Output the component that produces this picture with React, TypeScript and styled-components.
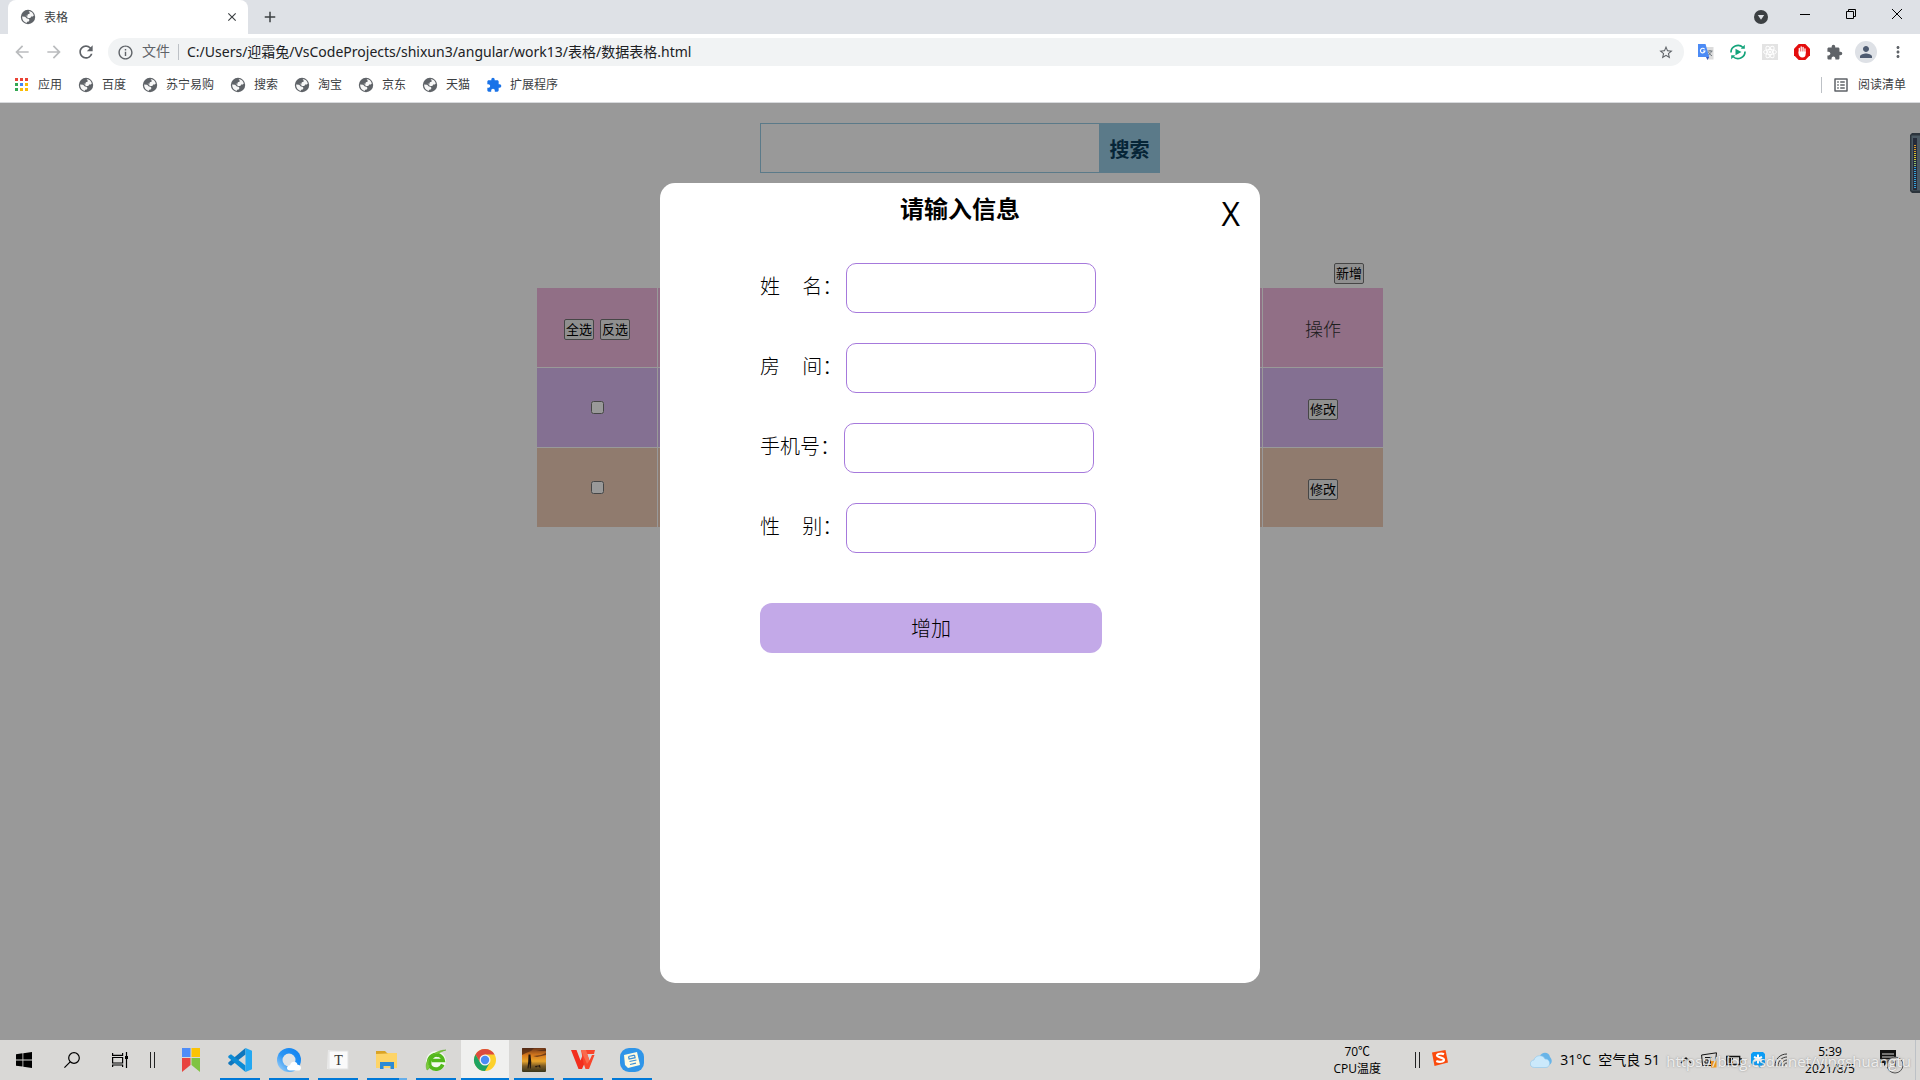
import React from "react";
import styled, { createGlobalStyle } from "styled-components";
import {
  MdAdd,
  MdArrowBack,
  MdArrowForward,
  MdClose,
  MdExtension,
  MdInfoOutline,
  MdMoreVert,
  MdOutlineListAlt,
  MdPerson,
  MdRefresh,
  MdStarBorder,
} from "react-icons/md";

const GlobalStyle = createGlobalStyle`
  *, *::before, *::after { box-sizing: border-box; }
  body {
    margin: 0;
    font-family: "Open Sans", "Noto Sans CJK SC", sans-serif;
    color: #000;
  }
  button, input {
    font-family: inherit;
    margin: 0;
  }
`;

const Screen = styled.div`
  display: flex;
  flex-direction: column;
  min-height: 100vh;
  overflow: hidden;
`;

/* ---------- browser frame ---------- */

const TabStrip = styled.div`
  display: flex;
  height: 34px;
  padding-left: 8px;
  background: #dee1e6;
`;

const Tab = styled.div`
  display: flex;
  align-items: center;
  gap: 8px;
  width: 240px;
  padding: 0 8px 0 12px;
  border-radius: 8px 8px 0 0;
  background: #fff;
  color: #3c4043;
  font-size: 12px;
`;

const TabTitle = styled.span`
  flex: 1;
`;

const PlainButton = styled.button<{ $width?: number; $color?: string }>`
  display: flex;
  align-items: center;
  justify-content: center;
  width: ${(p) => p.$width ?? 16}px;
  padding: 0;
  border: 0;
  background: transparent;
  color: ${(p) => p.$color ?? "#5f6368"};
`;

const WindowControls = styled.div`
  display: flex;
  align-items: center;
  height: 28px;
  margin-left: auto;
`;

const Toolbar = styled.div`
  display: flex;
  align-items: center;
  height: 36px;
  padding: 0 6px;
  background: #fff;
`;

const Omnibox = styled.div`
  display: flex;
  align-items: center;
  flex: 1;
  gap: 8px;
  height: 28px;
  margin: 0 6px;
  padding: 0 10px 0 9px;
  border-radius: 14px;
  background: #f1f3f4;
  color: #5f6368;
  font-size: 14px;
`;

const Scheme = styled.span`
  padding-bottom: 2px;
  line-height: 20px;
`;

const Divider = styled.span<{ $height: number }>`
  width: 1px;
  height: ${(p) => p.$height}px;
  background: #bdc1c6;
`;

const Address = styled.input`
  flex: 1;
  min-width: 0;
  padding: 0 0 2px;
  border: 0;
  outline: 0;
  background: transparent;
  color: #202124;
  font-family: "Noto Sans", "Noto Sans CJK SC", sans-serif;
  font-size: 14px;
`;

const Extensions = styled.div`
  display: flex;
  align-items: center;
`;

const Avatar = styled.span`
  display: flex;
  align-items: center;
  justify-content: center;
  width: 22px;
  height: 22px;
  border-radius: 50%;
  background: #dee1e6;
  color: #4d5a70;
`;

const Bookmarks = styled.nav`
  display: flex;
  align-items: center;
  gap: 16px;
  height: 33px;
  padding: 0 14px 3px;
  border-bottom: 1px solid #d8dadd;
  background: #fff;
`;

const Bookmark = styled.a`
  display: flex;
  align-items: center;
  gap: 8px;
  color: #3c4043;
  font-size: 12px;
  line-height: 16px;
  text-decoration: none;
`;

const ReadingList = styled.div`
  display: flex;
  align-items: center;
  gap: 10px;
  margin-left: auto;
`;

/* ---------- web page ---------- */

const Page = styled.main`
  position: relative;
  display: flex;
  flex: 1;
  flex-direction: column;
  align-items: center;
  padding-top: 20px;
  background: #fff;
`;

const SearchForm = styled.form`
  display: flex;
  width: 400px;
  height: 50px;
  margin-bottom: 90px;
`;

const SearchInput = styled.input`
  flex: 1;
  min-width: 0;
  border: 1px solid #98cbe5;
  border-right: 0;
  outline: 0;
  background: #fff;
`;

const SearchButton = styled.button`
  width: 61px;
  padding: 0;
  border: 0;
  background: #98cbe5;
  color: #0a3e5d;
  font-size: 20px;
  font-weight: 700;
`;

const TableArea = styled.section`
  width: 846px;
`;

const TableActions = styled.div`
  display: flex;
  justify-content: flex-end;
  padding: 0 19px 4px 0;
`;

const SmallButton = styled.button`
  height: 21px;
  padding: 0 1px;
  border: 1px solid #767676;
  border-radius: 2px;
  background: #efefef;
  color: #000;
  font-size: 13px;
  line-height: 19px;
`;

const Table = styled.table`
  width: 100%;
  border-collapse: separate;
  border-spacing: 0;
  table-layout: fixed;
`;

const Row = styled.tr<{ $tone: string }>`
  height: 80px;
  background: ${(p) => p.$tone};

  th, td {
    width: 121px;
    padding: 0;
    border-right: 1px solid #fff;
    border-bottom: 1px solid #fff;
    color: #333;
    font-size: 18px;
    font-weight: 300;
    text-align: center;
  }
  th:last-child, td:last-child {
    width: 120px;
    border-right: 0;
  }
`;

const ButtonPair = styled.div`
  display: flex;
  justify-content: center;
  gap: 6px;
  padding-top: 3px;
`;

const Check = styled.input`
  display: block;
  width: 13px;
  height: 13px;
  margin: 0 auto;
`;

const Mask = styled.div`
  position: absolute;
  inset: 0;
  display: flex;
  align-items: flex-start;
  justify-content: center;
  padding-top: 80px;
  background: rgba(0, 0, 0, 0.4);
`;

const Dialog = styled.div`
  position: relative;
  width: 600px;
  min-height: 800px;
  border-radius: 15px;
  background: #fff;
`;

const DialogTitle = styled.h2`
  height: 80px;
  margin: 0;
  padding-top: 8px;
  font-size: 24px;
  line-height: 36px;
  text-align: center;
`;

const DialogClose = styled.button`
  position: absolute;
  top: 11px;
  right: 20px;
  padding: 0;
  border: 0;
  background: transparent;
  font-size: 32px;
  line-height: 40px;
`;

const DialogForm = styled.form`
  display: flex;
  flex-direction: column;
  gap: 30px;
  padding-left: 100px;
`;

const Field = styled.div`
  display: flex;
  align-items: center;
  gap: 4px;
`;

const FieldLabel = styled.label`
  padding-bottom: 2px;
  font-size: 20px;
  font-weight: 300;
  line-height: 30px;
  white-space: pre;
`;

const FieldInput = styled.input`
  width: 250px;
  height: 50px;
  padding: 0 10px;
  border: 1px solid #a679dc;
  border-radius: 10px;
  outline: 0;
  font-size: 20px;
`;

const SubmitButton = styled.button`
  width: 342px;
  height: 50px;
  margin-top: 20px;
  padding: 0 0 2px;
  border: 0;
  border-radius: 12px;
  background: #c3a9e8;
  color: #000;
  font-size: 20px;
  font-weight: 300;
`;

const Gauge = styled.div`
  position: absolute;
  top: 30px;
  right: 0;
  display: flex;
`;

/* ---------- desktop taskbar ---------- */

const Taskbar = styled.footer`
  position: relative;
  display: flex;
  height: 40px;
  background: #d9d8d6;
`;

const TaskButton = styled.button<{ $state?: "open" | "active" | "stacked" }>`
  position: relative;
  display: flex;
  align-items: center;
  justify-content: center;
  width: 48px;
  height: 40px;
  padding: 0;
  border: 0;
  background: ${(p) => (p.$state === "active" ? "#f0f0ef" : "transparent")};

  &::after {
    content: "";
    position: absolute;
    right: ${(p) => (p.$state === "active" ? 0 : 4)}px;
    bottom: 0;
    left: ${(p) => (p.$state === "active" ? 0 : 4)}px;
    height: 2px;
    background: ${(p) =>
      p.$state === "stacked"
        ? "linear-gradient(90deg, #0078d7 80%, #66aeea 80%)"
        : p.$state
        ? "#0078d7"
        : "transparent"};
  }
`;

const Apps = styled.div`
  display: flex;
  gap: 1px;
`;

const Grip = styled.span`
  align-self: center;
  width: 5px;
  height: 16px;
  border: solid #222;
  border-width: 0 1px;
`;

const Tray = styled.div`
  display: flex;
  align-items: center;
  margin-left: auto;
`;

const TwoLines = styled.div<{ $width: number }>`
  width: ${(p) => p.$width}px;
  font-size: 12px;
  line-height: 17px;
  text-align: center;
`;

const TrayGroup = styled.div<{ $gap: number; $left: number }>`
  display: flex;
  align-items: center;
  gap: ${(p) => p.$gap}px;
  margin-left: ${(p) => p.$left}px;
`;

const Weather = styled.span`
  font-size: 14px;
  line-height: 20px;
  white-space: nowrap;
`;

const Watermark = styled.span`
  position: absolute;
  right: 9px;
  bottom: 8px;
  color: rgba(255, 255, 255, 0.8);
  font-size: 15px;
  line-height: 22px;
  text-shadow: 0 0 2px rgba(110, 110, 110, 0.7);
  pointer-events: none;
`;

/* ---------- drawings ---------- */

const Globe = () => (
  <svg width="16" height="16" viewBox="0 0 16 16">
    <circle cx="8" cy="8" r="7.2" fill="#5f6368" />
    <path d="M8.6 2.1c2.6.1 4.7 2 5.2 4.4l-1 .9-1.6.1-.9 1.6H7.5V7.7L5.4 6.8h2.1l.3-1.6 1.8-.4V3.6z" fill="#fff" opacity=".95" />
    <path d="M2.1 7.5l3 .3 1.8 1.7 1.7.2.9 1.3-.8 1.4-1.5.3-.6 1.2C3.8 13.100 2 10.800 2.1 7.500z" fill="#fff" opacity=".95" />
  </svg>
);

const AppsGrid = () => (
  <svg width="16" height="16" viewBox="0 0 16 16">
    {["#ea4335", "#ea4335", "#ea4335", "#34a853", "#4285f4", "#fbbc04", "#34a853", "#fbbc04", "#fbbc04"].map((c, i) => (
      <rect key={i} x={1 + (i % 3) * 5} y={1 + Math.floor(i / 3) * 5} width="3" height="3" fill={c} />
    ))}
  </svg>
);

const DropMark = () => (
  <svg width="14" height="20" viewBox="0 0 14 20">
    <circle cx="7" cy="13" r="7" fill="#3c4043" />
    <path d="M3.800 11h6.400L7 15.800z" fill="#dee1e6" />
  </svg>
);

const Minimize = () => (
  <svg width="10" height="10" viewBox="0 0 10 10"><path d="M0 5.500h10" stroke="#000" /></svg>
);

const Restore = () => (
  <svg width="10" height="10" viewBox="0 0 10 10" fill="none" stroke="#000">
    <path d="M.5 2.500h7v7h-7zM2.500 2.500v-2h7v7h-2" />
  </svg>
);

const CloseWindow = () => (
  <svg width="10" height="10" viewBox="0 0 10 10"><path d="M0 0l10 10M10 0L0 10" stroke="#000" /></svg>
);

const Translate = () => (
  <svg width="16" height="16" viewBox="0 0 16 16">
    <path d="M7 3h8.500v12.500H9z" fill="#dcdcdc" />
    <path d="M9.500 7h5M12 6v1M13.500 7c-.5 2-2 3.500-3.500 4.200M10.500 8c.8 1.800 2 3 3.500 3.800" stroke="#70787f" fill="none" />
    <path d="M0 0h7.500l3.700 13H0z" fill="#4c8bf5" />
    <path d="M8 13h3.200L9.500 16z" fill="#3457c0" />
    <path d="M6.600 5.200A2.300 2.300 0 1 0 7 7H5" stroke="#fff" strokeWidth="1.100" fill="none" />
  </svg>
);

const SyncPlay = () => (
  <svg width="16" height="16" viewBox="0 0 16 16" fill="none" stroke="#12a37a" strokeWidth="1.700">
    <path d="M1 8.500a7 6.800 0 0 1 12-5M15 7.500a7 6.800 0 0 1-12 5" />
    <path d="M14.800.8v4h-4zM1.200 15.200v-4h4z" fill="#12a37a" stroke="none" />
    <path d="M5.500 4.800v6.400L11.500 8z" fill="#12a37a" stroke="none" />
  </svg>
);

const ReactBadge = () => (
  <svg width="16" height="16" viewBox="0 0 16 16" fill="none" stroke="#fff">
    <path d="M0 0h16v16H0z" fill="#e3e3e3" stroke="none" />
    <ellipse cx="8" cy="8" rx="6.500" ry="2.500" />
    <ellipse cx="8" cy="8" rx="6.500" ry="2.500" transform="rotate(60 8 8)" />
    <ellipse cx="8" cy="8" rx="6.500" ry="2.500" transform="rotate(120 8 8)" />
    <circle cx="8" cy="8" r="1" fill="#fff" />
  </svg>
);

const StopHand = () => (
  <svg width="16" height="16" viewBox="0 0 16 16">
    <path d="M4.700 0h6.600L16 4.700v6.600L11.300 16H4.700L0 11.300V4.700z" fill="#e40d0d" />
    <path d="M5.300 9V4.500M7.200 8V3M9.100 8V3.300M11 9V4.800" stroke="#fff" strokeWidth="1.300" strokeLinecap="round" />
    <path d="M4.600 7.500h7v3c0 2-1.300 3-3.200 3-2.200 0-3.800-2-3.800-3.500z" fill="#fff" />
  </svg>
);

const AudioGauge = () => (
  <svg width="10" height="60" viewBox="0 0 10 60">
    <path d="M10 0H2L0 2v56l2 2h8z" fill="#2c343c" />
    <path d="M1.500 2.500H10v55H1.500z" fill="#4b5963" />
    <rect x="3" y="5" width="4" height="52" fill="#262b3a" />
    {Array.from({ length: 22 }, (_, i) => (
      <rect key={i} x="4" y={12 + i * 2} width="2" height="1" fill={i < 4 ? "#d79a2b" : i < 8 ? "#d9c630" : i < 11 ? "#8fc06a" : "#35a3da"} />
    ))}
  </svg>
);

const StartLogo = () => (
  <svg width="16" height="16" viewBox="0 0 16 16">
    <path d="M0 2.300L6.500 1.300v6.200H0zM7.300 1.200L16 0v7.500H7.300zM0 8.400h6.500v6.200L0 13.700zM7.300 8.400H16V16l-8.700-1.200z" />
  </svg>
);

const SearchGlyph = () => (
  <svg width="16" height="16" viewBox="0 0 16 16" fill="none" stroke="#000" strokeWidth="1.200">
    <circle cx="10" cy="6" r="5.300" />
    <path d="M6.200 9.800L.4 15.600" />
  </svg>
);

const TaskView = () => (
  <svg width="16" height="16" viewBox="0 0 16 16" fill="none" stroke="#000" strokeWidth="1.200">
    <path d="M.6 1v2.400h10V1M.6 15v-2h10v2M.6 5.500h10v5.500H.6zM14.500 0v16" />
    <path d="M13 4h3v3h-3z" fill="#000" stroke="none" />
  </svg>
);

const Ribbons = () => (
  <svg width="18" height="24" viewBox="0 0 18 24">
    <path d="M0 0h8.500v9H0z" fill="#4f8df7" />
    <path d="M9.500 0H18v9H9.500z" fill="#fcc304" />
    <path d="M0 10h8.500v7L0 24z" fill="#e8443f" />
    <path d="M9.500 10H18v14l-8.500-7z" fill="#80c342" />
  </svg>
);

const Code = () => (
  <svg width="24" height="24" viewBox="0 0 24 24">
    <path d="M17.500 0v6.500L3 17.800.3 15.900v-1.500z" fill="#0f76bd" />
    <path d="M17.500 24v-6.500L3 6.200.3 8.100v1.500z" fill="#0c8bd5" />
    <path d="M17.500 0L24 2.800v18.400L17.500 24z" fill="#24a8f2" />
  </svg>
);

const QBrowser = () => (
  <svg width="24" height="24" viewBox="0 0 24 24">
    <defs>
      <linearGradient id="q" x1="1" y1="0" x2="0" y2="1">
        <stop offset="0" stopColor="#0b80f0" />
        <stop offset=".55" stopColor="#2b95f4" />
        <stop offset="1" stopColor="#b2daf8" />
      </linearGradient>
    </defs>
    <circle cx="12" cy="12" r="12" fill="url(#q)" />
    <circle cx="12" cy="12" r="6.500" fill="#dfe3e6" />
    <path d="M13 22.500c-4 0-4-5 0-5.200.8-4.500 7-4.500 7.500-.5 4.500.2 4.500 5.700.7 5.700z" fill="#fff" />
  </svg>
);

const Typora = () => (
  <svg width="24" height="24" viewBox="0 0 24 24">
    <path d="M2 2l9 1 10 0v18l-9-1-11 1z" fill="#ececec" />
    <rect x="3" y="3" width="19" height="18" fill="#fafafa" stroke="#e2e2e2" />
    <text x="12.500" y="17" textAnchor="middle" fontFamily="Liberation Serif" fontSize="14" fill="#333">T</text>
  </svg>
);

const Folder = () => (
  <svg width="24" height="20" viewBox="0 0 24 20">
    <path d="M1 1h9l2 2h10v15H1z" fill="#d9a326" />
    <path d="M1 4l11-.5 1-.5h9v15H1z" fill="#fdd468" />
    <path d="M5 12h14v7h-3.500v-3h-7v3H5z" fill="#2b8ad6" />
  </svg>
);

const GreenE = () => (
  <svg width="24" height="24" viewBox="0 0 24 24" fill="none">
    <circle cx="12" cy="13" r="10" fill="#f4faf0" />
    <path d="M18.800 16.500A7.300 7.300 0 1 1 19.200 12.500H8" stroke="#52b81b" strokeWidth="3.600" />
    <path d="M3 22C-1 13 10 2 22 2 15 4 6 10 5.500 19c0 1-1 2.500-2.500 3z" fill="#7ccb3c" stroke="#58aa25" strokeWidth=".5" />
    <path d="M6 17c-1-8 5-11 9-9" stroke="#52b81b" strokeWidth="3" />
  </svg>
);

const ChromeLogo = () => (
  <svg width="24" height="24" viewBox="0 0 24 24">
    <circle cx="12" cy="12" r="11" fill="#fdd12c" />
    <path d="M2.470 6.500A11 11 0 0 1 21.530 6.500H12L7.240 14.750z" fill="#dc4b3e" />
    <path d="M2.470 6.500A11 11 0 0 0 12 23l4.760-8.250H7.240z" fill="#1ea362" />
    <circle cx="12" cy="12" r="5.500" fill="#f3f3f3" />
    <circle cx="12" cy="12" r="4.200" fill="#4a8bf5" />
  </svg>
);

const SunsetPicture = () => (
  <svg width="24" height="24" viewBox="0 0 24 24">
    <defs>
      <linearGradient id="sunset" x1="0" y1="0" x2="0" y2="1">
        <stop offset="0" stopColor="#6b3518" />
        <stop offset=".3" stopColor="#d87a1d" />
        <stop offset=".55" stopColor="#e8a52c" />
        <stop offset=".75" stopColor="#7a5a25" />
        <stop offset="1" stopColor="#3a351a" />
      </linearGradient>
    </defs>
    <rect width="24" height="24" rx="1" fill="url(#sunset)" />
    <path d="M0 0h12L9 3 4 5 0 7zM14 3l10-2v2zM11 8l8-1 5-2v2l-9 2z" fill="#4a2716" opacity=".7" />
    <path d="M6.500 6.500h2l.8 8-.5 6H7.800l-.3-5-1 5H5.500l.7-7zM13 18l4-.5 1-.8.500 3h-.8l-.7-1.200h-2l-1 1.200z" fill="#20160f" />
  </svg>
);

const Wps = () => (
  <svg width="24" height="20" viewBox="0 0 24 20">
    <path d="M0 0h5.500l4 10.500L12.500 3l2.500 7L11 19H7.500z" fill="#f22e1e" />
    <path d="M10 0h14l-1 4h-7l2.500 6.500L21 5h2.500L18 19h-3.500l-2-6z" fill="#f8452b" />
    <path d="M10 0h5l3.500 10.500L16 14l-4-9z" fill="#fa6a4c" />
  </svg>
);

const Notes = () => (
  <svg width="24" height="24" viewBox="0 0 24 24">
    <rect width="24" height="24" rx="9" fill="#2f95e8" />
    <path d="M4 7l13-3 3 13-12 3-3-3z" fill="#fffbe0" />
    <path d="M8.500 8.500l6-1.300M8.500 8.500l.6 2.500 6-1.300-.6-2.500M9.500 13.500l7-1.500M10 16.500l6-1.300" stroke="#3c8fd6" strokeWidth="1.200" fill="none" />
  </svg>
);

const Sogou = () => (
  <svg width="16" height="20" viewBox="0 0 16 20">
    <path d="M0 2.500L13.500 0 16 12.500 2.500 16z" fill="#fb4a0c" />
    <path d="M12 4.200c-2-1-7-.6-7 1.300S12 7.300 12 9.700s-5 2.600-7.700 1.300" stroke="#fff" strokeWidth="2.200" fill="none" />
  </svg>
);

const Cloud = () => (
  <svg width="22" height="16" viewBox="0 0 22 16">
    <path d="M10 4c1-4 9-5 10 1 3 3 2 8-2 8H9z" fill="#68b4e8" />
    <path d="M4.500 15.500C-1 15.500-1 8.500 4 8c1-5 9-6 11-1 6 0 6 8 1 8.500z" fill="#cbe9fb" stroke="#8cc6ec" strokeWidth=".6" />
  </svg>
);

const Chevron = () => (
  <svg width="12" height="8" viewBox="0 0 12 8" fill="none" stroke="#111" strokeWidth="1.300"><path d="M1 7l5-5 5 5" /></svg>
);

const InputTray = () => (
  <svg width="16" height="16" viewBox="0 0 16 16" fill="none" stroke="#111">
    <path d="M.6 3L15.500.8 14 13.500H1.500zM4 5.500h7M4 8h3v3H4zM9.500 5.500v6" />
    <path d="M10 9h5.500v6.500H10z" fill="#f59b1c" stroke="none" />
  </svg>
);

const Battery = () => (
  <svg width="16" height="12" viewBox="0 0 16 12" fill="none" stroke="#111" strokeWidth="1.300">
    <path d="M.7 2.500h13v8H.7zM14 5h1.500v3H14" />
    <path d="M2 4h3v5H2zM6 4h1v5H6z" fill="#111" stroke="none" />
  </svg>
);

const BlueBadge = () => (
  <svg width="14" height="16" viewBox="0 0 14 16">
    <path d="M2 0h10l2 2v10l-3 1-2 3-2-3H2l-2-2V2z" fill="#0b9cf5" />
    <path d="M7 2.500v9M3 5l8 4M11 5L3 9" stroke="#fff" strokeWidth="2" />
  </svg>
);

const Wifi = () => (
  <svg width="14" height="14" viewBox="0 0 14 14" fill="none" stroke="#333">
    <path d="M1 13C1 6 6 1 13 1M4 13c0-5 4-9 9-9M7 13c0-3 3-6 6-6M10 13c0-2 1-3 3-3" />
  </svg>
);

const Notifications = () => (
  <svg width="28" height="28" viewBox="0 0 28 28">
    <path d="M2 4h16v13H9l-3 3v-3H2z" fill="#111" />
    <path d="M4 8h12M4 11h12M4 14h8" stroke="#d9d8d6" />
    <circle cx="17" cy="19" r="8" fill="#d9d8d6" fillOpacity=".85" stroke="#555" />
    <text x="17" y="23" textAnchor="middle" fontFamily="Open Sans" fontSize="11" fill="#111">1</text>
  </svg>
);

/* ---------- data ---------- */

const bookmarks = ["百度", "苏宁易购", "搜索", "淘宝", "京东", "天猫"];

const fields = [
  { id: "name", label: "姓\u00a0\u00a0\u00a0\u2006\u2006名：" },
  { id: "room", label: "房\u00a0\u00a0\u00a0\u2006\u2006间：" },
  { id: "phone", label: "手机号：" },
  { id: "gender", label: "性\u00a0\u00a0\u00a0\u2006\u2006别：" },
];

const rowTones = ["#dcbbf3", "#f0cdb7"];
const middleColumns = [1, 2, 3, 4, 5];

const openApps: { name: string; icon: React.ReactNode; state?: "open" | "active" | "stacked" }[] = [
  { name: "应用", icon: <Ribbons /> },
  { name: "Code", icon: <Code />, state: "open" },
  { name: "浏览器", icon: <QBrowser />, state: "open" },
  { name: "Typora", icon: <Typora />, state: "open" },
  { name: "文件", icon: <Folder />, state: "stacked" },
  { name: "安全浏览器", icon: <GreenE />, state: "open" },
  { name: "Chrome", icon: <ChromeLogo />, state: "active" },
  { name: "图片", icon: <SunsetPicture />, state: "open" },
  { name: "WPS", icon: <Wps />, state: "open" },
  { name: "便签", icon: <Notes />, state: "open" },
];

export default function App() {
  return (
    <Screen>
      <GlobalStyle />
      <header>
        <TabStrip>
          <Tab>
            <Globe />
            <TabTitle>表格</TabTitle>
            <PlainButton $color="#3c4043" aria-label="关闭标签页"><MdClose size={14} /></PlainButton>
          </Tab>
          <PlainButton $width={44} $color="#3c4043" aria-label="新标签页"><MdAdd size={18} /></PlainButton>
          <WindowControls>
            <PlainButton $width={42} aria-label="搜索标签页"><DropMark /></PlainButton>
            <PlainButton $width={46} aria-label="最小化"><Minimize /></PlainButton>
            <PlainButton $width={46} aria-label="还原"><Restore /></PlainButton>
            <PlainButton $width={46} aria-label="关闭"><CloseWindow /></PlainButton>
          </WindowControls>
        </TabStrip>
        <Toolbar>
          <PlainButton $width={32} $color="#babcbe" aria-label="后退"><MdArrowBack size={20} /></PlainButton>
          <PlainButton $width={32} $color="#babcbe" aria-label="前进"><MdArrowForward size={20} /></PlainButton>
          <PlainButton $width={32} aria-label="刷新"><MdRefresh size={20} /></PlainButton>
          <Omnibox>
            <MdInfoOutline size={17} />
            <Scheme>文件</Scheme>
            <Divider $height={16} />
            <Address aria-label="地址" defaultValue="C:/Users/迎霜兔/VsCodeProjects/shixun3/angular/work13/表格/数据表格.html" />
            <PlainButton aria-label="收藏"><MdStarBorder size={17} /></PlainButton>
          </Omnibox>
          <Extensions>
            <PlainButton $width={32} aria-label="翻译"><Translate /></PlainButton>
            <PlainButton $width={32} aria-label="同步"><SyncPlay /></PlainButton>
            <PlainButton $width={32} aria-label="React"><ReactBadge /></PlainButton>
            <PlainButton $width={32} aria-label="拦截"><StopHand /></PlainButton>
            <PlainButton $width={32} aria-label="扩展程序"><MdExtension size={17} /></PlainButton>
            <PlainButton $width={32} aria-label="个人资料"><Avatar><MdPerson size={18} /></Avatar></PlainButton>
            <PlainButton $width={32} aria-label="菜单"><MdMoreVert size={18} /></PlainButton>
          </Extensions>
        </Toolbar>
        <Bookmarks>
          <Bookmark href="#"><AppsGrid />应用</Bookmark>
          {bookmarks.map((name) => (
            <Bookmark href="#" key={name}><Globe />{name}</Bookmark>
          ))}
          <Bookmark href="#"><MdExtension size={16} color="#1a73e8" />扩展程序</Bookmark>
          <ReadingList>
            <Divider $height={16} />
            <Bookmark href="#"><MdOutlineListAlt size={18} color="#5f6368" />阅读清单</Bookmark>
          </ReadingList>
        </Bookmarks>
      </header>

      <Page>
        <SearchForm>
          <SearchInput aria-label="搜索内容" />
          <SearchButton type="button">搜索</SearchButton>
        </SearchForm>
        <TableArea>
          <TableActions><SmallButton>新增</SmallButton></TableActions>
          <Table>
            <thead>
              <Row $tone="#f2b9df">
                <th>
                  <ButtonPair>
                    <SmallButton>全选</SmallButton>
                    <SmallButton>反选</SmallButton>
                  </ButtonPair>
                </th>
                {middleColumns.map((c) => <th key={c} />)}
                <th>操作</th>
              </Row>
            </thead>
            <tbody>
              {rowTones.map((tone) => (
                <Row key={tone} $tone={tone}>
                  <td><Check type="checkbox" aria-label="选择此行" /></td>
                  {middleColumns.map((c) => <td key={c} />)}
                  <td><SmallButton>修改</SmallButton></td>
                </Row>
              ))}
            </tbody>
          </Table>
        </TableArea>

        <Mask>
          <Dialog role="dialog" aria-labelledby="dialog-title">
            <DialogTitle id="dialog-title">请输入信息</DialogTitle>
            <DialogClose aria-label="关闭">X</DialogClose>
            <DialogForm>
              {fields.map((f) => (
                <Field key={f.id}>
                  <FieldLabel htmlFor={f.id}>{f.label}</FieldLabel>
                  <FieldInput id={f.id} />
                </Field>
              ))}
              <SubmitButton type="button">增加</SubmitButton>
            </DialogForm>
          </Dialog>
        </Mask>
        <Gauge><AudioGauge /></Gauge>
      </Page>

      <Taskbar>
        <TaskButton aria-label="开始"><StartLogo /></TaskButton>
        <TaskButton aria-label="搜索"><SearchGlyph /></TaskButton>
        <TaskButton aria-label="任务视图"><TaskView /></TaskButton>
        <TrayGroup $gap={0} $left={6}><Grip /></TrayGroup>
        <TrayGroup $gap={0} $left={12}>
          <Apps>
            {openApps.map((a) => (
              <TaskButton key={a.name} $state={a.state} aria-label={a.name}>{a.icon}</TaskButton>
            ))}
          </Apps>
        </TrayGroup>
        <Tray>
          <TwoLines $width={64}>70℃<br />CPU温度</TwoLines>
          <TrayGroup $gap={12} $left={26}><Grip /><Sogou /></TrayGroup>
          <TrayGroup $gap={8} $left={82}><Cloud /><Weather>31°C&nbsp; 空气良 51</Weather></TrayGroup>
          <TrayGroup $gap={9} $left={20}><Chevron /><InputTray /><Battery /><BlueBadge /><Wifi /></TrayGroup>
          <TrayGroup $gap={16} $left={10}>
            <TwoLines $width={64}>5:39<br />2021/8/5</TwoLines>
            <Notifications />
          </TrayGroup>
          <TrayGroup $gap={0} $left={9}><Divider $height={40} /></TrayGroup>
          <TrayGroup $gap={0} $left={4} />
        </Tray>
        <Watermark>https://blog.csdn.net/yingshuangtu</Watermark>
      </Taskbar>
    </Screen>
  );
}
